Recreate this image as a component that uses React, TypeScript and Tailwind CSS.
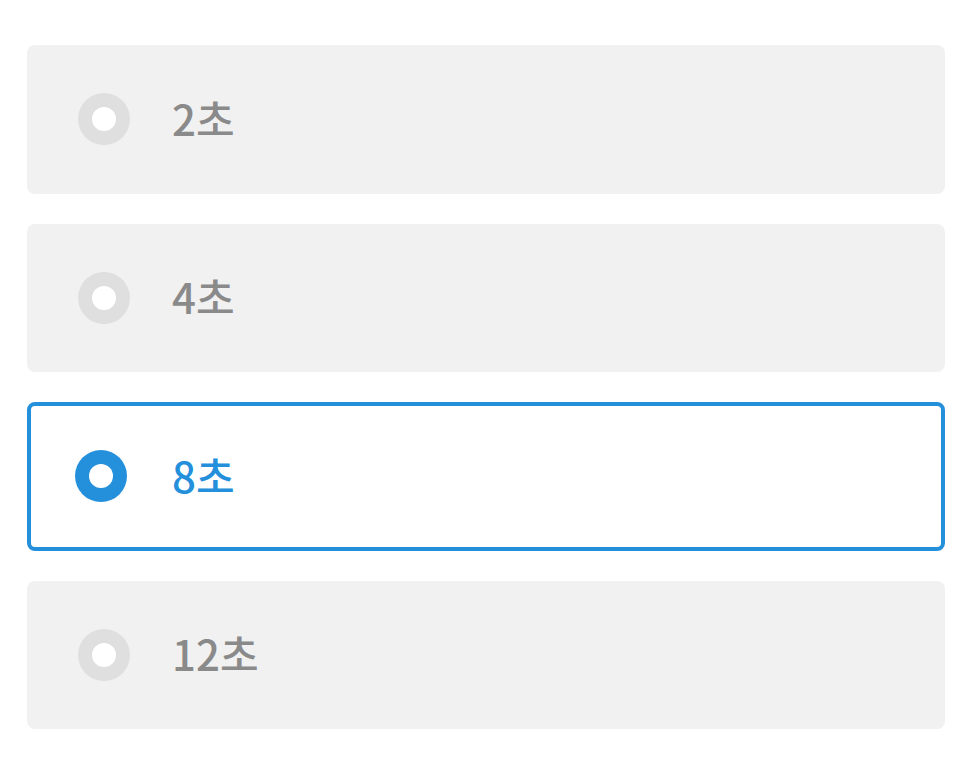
import React from "react";

const options = [
  { id: "2", label: "2초" },
  { id: "4", label: "4초" },
  { id: "8", label: "8초" },
  { id: "12", label: "12초" },
];

export default function App() {
  const selected = "8";
  return (
    <div
      className="min-h-screen bg-white pt-[45px] pl-[27px] pr-[30px]"
      style={{ fontFamily: '"Noto Sans CJK KR", "Noto Sans", sans-serif' }}
    >
      <div className="flex flex-col gap-[30px]">
        {options.map((opt) => {
          const active = opt.id === selected;
          return (
            <div
              key={opt.id}
              className={`flex h-[148.5px] items-center rounded-[8px] ${
                active
                  ? "border-[4px] border-[#2490dc] bg-white pl-[44px]"
                  : "bg-[#f1f1f1] pl-[51px]"
              }`}
            >
              <span
                className={`flex h-[52px] w-[52px] items-center justify-center rounded-full ${
                  active ? "bg-[#2490dc]" : "bg-[#dfdfdf]"
                }`}
              >
                <span className="h-[24px] w-[24px] rounded-full bg-white" />
              </span>
              <span
                className={`-mt-[3px] text-[42px] font-medium leading-none ${
                  active ? "ml-[45px] text-[#2490dc]" : "ml-[42px] text-[#8a8a8a]"
                }`}
              >
                {opt.label}
              </span>
            </div>
          );
        })}
      </div>
    </div>
  );
}
